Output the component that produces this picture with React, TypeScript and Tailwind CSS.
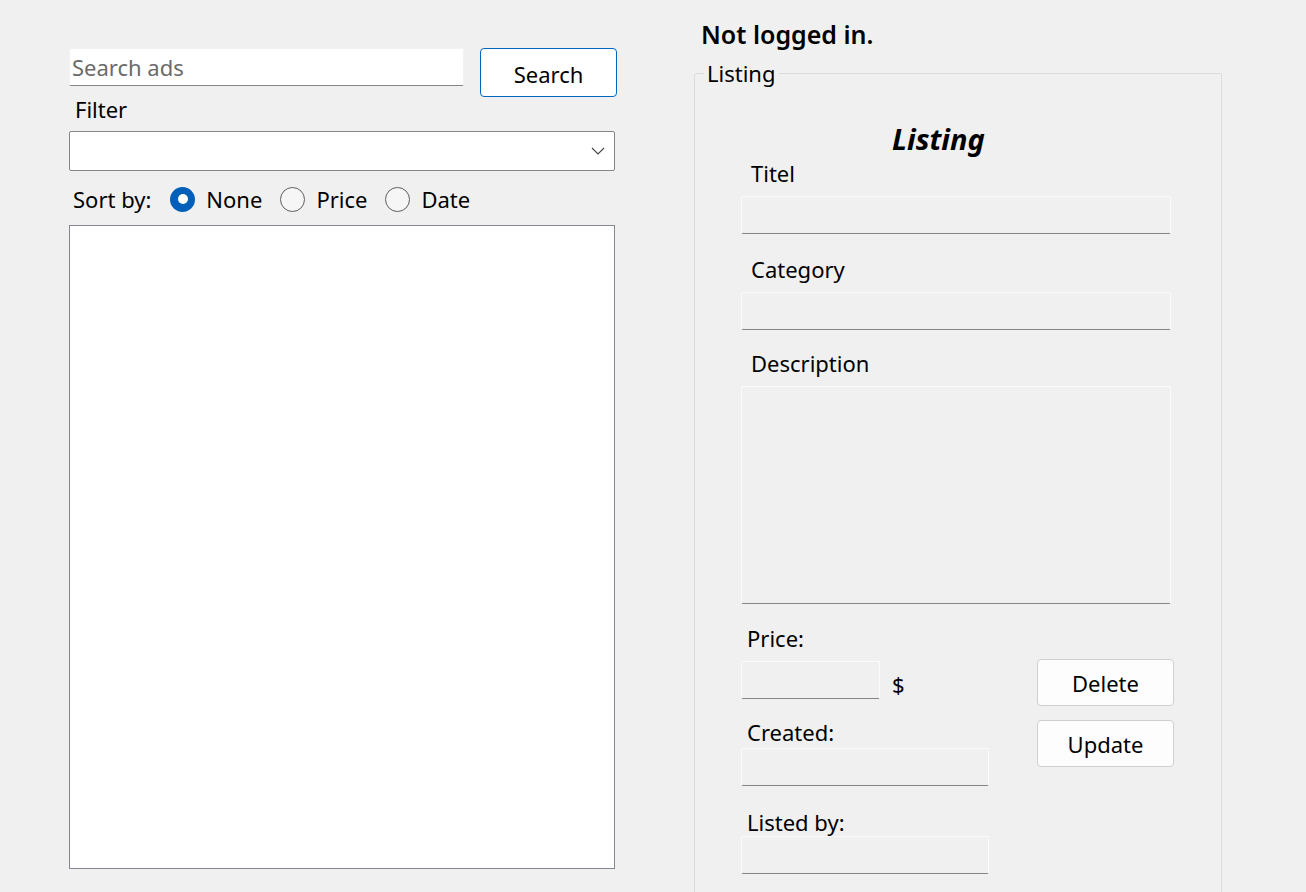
import React from 'react';

const ReadOnlyBox = ({ className }: { className: string }) => (
  <div className={`bg-[#f0f0f0] border border-[#fbfbfb] border-b-[#868686] rounded-[2px] ${className}`} />
);

const Radio = ({ label, checked }: { label: string; checked?: boolean }) => (
  <div className="flex items-center">
    {checked ? (
      <span className="w-[25px] h-[25px] rounded-full bg-[#005fb8] flex items-center justify-center">
        <span className="w-[10px] h-[10px] rounded-full bg-white" />
      </span>
    ) : (
      <span className="w-[25px] h-[25px] rounded-full border border-[#5e5e5e] bg-[#f6f6f6]" />
    )}
    <span className="ml-[11px]">{label}</span>
  </div>
);

const App = () => {
  return (
    <div
      className="w-[1306px] h-[892px] overflow-hidden bg-[#f0f0f0] text-black text-[22px] leading-[26px] flex"
      style={{ fontFamily: '"Noto Sans", "Open Sans", sans-serif' }}
    >
      {/* left side: search + results */}
      <div className="pl-[69px] pt-[48px] w-[546px] box-content">
        <div className="flex items-start">
          <div className="shrink-0 w-[395px] h-[38px] bg-white border border-[#f2f2f2] border-b-[#868686] rounded-[2px] flex items-center px-[2px] text-[#6b6b6b]">
            Search ads
          </div>
          <button className="shrink-0 ml-[16px] w-[137px] h-[49px] bg-white border border-[#0067c0] rounded-[4px] pt-[2px]">
            Search
          </button>
        </div>
        <div className="-mt-px pl-[6px]">Filter</div>
        <div className="mt-[9px] h-[40px] bg-white border border-[#868686] rounded-[2px] flex items-center justify-end pr-[9px]">
          <svg width="14" height="8" viewBox="0 0 14 8" fill="none">
            <path d="M1 1l6 6 6-6" stroke="#444" strokeWidth="1.1" />
          </svg>
        </div>
        <div className="mt-[15px] h-[26px] flex items-center gap-[18px] pl-[4px]">
          <span className="mr-px">Sort by:</span>
          <Radio label="None" checked />
          <Radio label="Price" />
          <Radio label="Date" />
        </div>
        <div className="mt-[13px] h-[644px] bg-white border border-[#828790]" />
      </div>

      {/* right side: listing details */}
      <div className="ml-[79px] pt-[20px]">
        <div className="pl-[7px] text-[25px] leading-[28px] font-semibold">Not logged in.</div>
        <fieldset className="mt-[13px] w-[528px] h-[900px] border border-[#dcdcdc] rounded-[2px]">
          <legend className="ml-[9px] px-[3px] leading-[24px]">Listing</legend>
          <div className="pl-[46px] pt-[37px]">
            <div className="pl-[151px] text-[29px] leading-[34px] font-bold italic">Listing</div>
            <div className="mt-[4px] pl-[10px]">Titel</div>
            <ReadOnlyBox className="mt-[10px] w-[430px] h-[38px]" />
            <div className="mt-[22px] pl-[10px]">Category</div>
            <ReadOnlyBox className="mt-[10px] w-[430px] h-[38px]" />
            <div className="mt-[20px] pl-[10px]">Description</div>
            <ReadOnlyBox className="mt-[10px] w-[430px] h-[218px]" />
            <div className="mt-[21px] flex">
              <div className="w-[296px]">
                <div className="pl-[6px]">Price:</div>
                <div className="mt-[10px] flex items-center">
                  <ReadOnlyBox className="w-[139px] h-[38px]" />
                  <span className="ml-[12px] mt-[8px]">$</span>
                </div>
                <div className="mt-[20px] pl-[6px]">Created:</div>
                <ReadOnlyBox className="mt-[3px] w-[248px] h-[38px]" />
                <div className="mt-[23px] pl-[6px]">Listed by:</div>
                <ReadOnlyBox className="mt-px w-[248px] h-[38px]" />
              </div>
              <div className="pt-[34px] flex flex-col gap-[14px]">
                <button className="w-[137px] h-[47px] bg-[#fdfdfd] border border-[#cfcfcf] rounded-[4px]">Delete</button>
                <button className="w-[137px] h-[47px] bg-[#fdfdfd] border border-[#cfcfcf] rounded-[4px]">Update</button>
              </div>
            </div>
          </div>
        </fieldset>
      </div>
    </div>
  );
};

export default App;
